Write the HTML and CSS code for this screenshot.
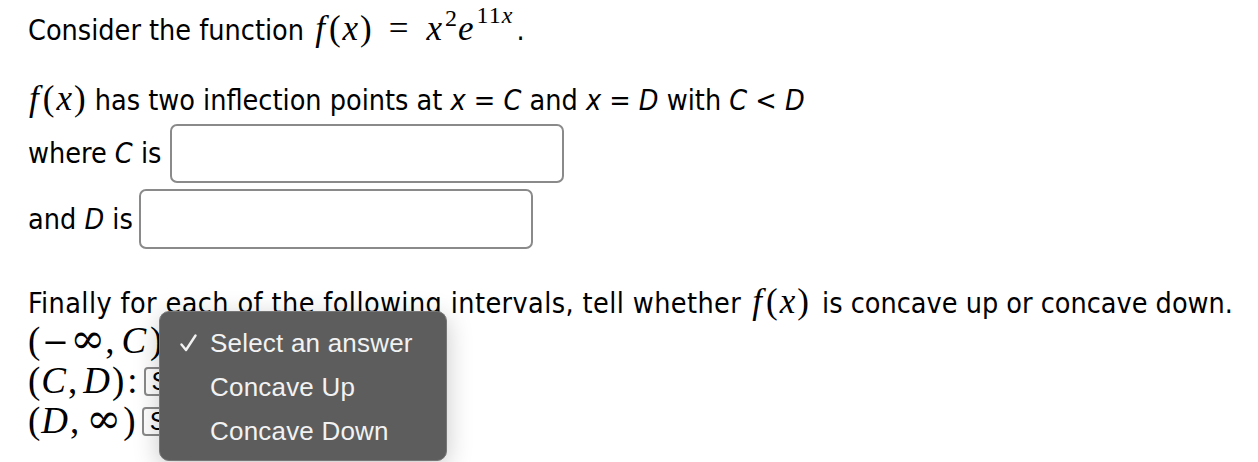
FILE: index.html
```html
<!DOCTYPE html>
<html>
<head>
<meta charset="utf-8">
<link rel="stylesheet" href="styles.css">
</head>
<body>
<div class="page">
  <p class="line l1">Consider the function <span class="math m1"><i class="f">f</i>(<i class="x">x</i>)<span class="op">=</span><i class="x">x</i><sup>2</sup><i>e</i><sup class="sup2">11<i>x</i></sup></span>.</p>
  <p class="line l2"><span class="math"><i class="f">f</i>(<i class="x">x</i>)</span> has two inflection points at <i>x</i> = <i>C</i> and <i>x</i> = <i>D</i> with <i>C</i> &lt; <i>D</i></p>
  <div class="row r1"><span class="label">where <i>C</i> is</span><span class="box box1"></span></div>
  <div class="row r2"><span class="label">and <i>D</i> is</span><span class="box box2"></span></div>
  <p class="line l3"><span class="wide">Finally for each of the following intervals, tell whether</span> <span class="math m3"><i class="f">f</i>(<i class="x">x</i>)</span> is concave up or concave down.</p>
  <div class="intervals">
    <div class="irow"><span class="math">(<span class="minus">−</span><span class="sym">∞</span>,<i class="cv c1">C</i>)</span><span class="sel">Select an answer</span></div>
    <div class="irow"><span class="math">(<i class="cv c0">C</i>,<i class="cv">D</i>)</span><span class="colon">:</span><span class="sel">Select an answer</span></div>
    <div class="irow"><span class="math">(<i class="cv c0">D</i>,<span class="sym inf">∞</span>)</span><span class="sel s3">Select an answer</span></div>
  </div>
  <div class="menu">
    <div class="item"><span class="check"><svg width="17" height="18" viewBox="0 0 17 18"><path d="M1.5 10.5 L6 16 L15.5 1.5" fill="none" stroke="#f2f2f2" stroke-width="2.4" stroke-linecap="round" stroke-linejoin="round"/></svg></span>Select an answer</div>
    <div class="item"><span class="check"></span>Concave Up</div>
    <div class="item"><span class="check"></span>Concave Down</div>
  </div>
</div>
</body>
</html>
```
FILE: styles.css
```css
html, body {
  margin: 0;
  padding: 0;
  background: #ffffff;
}
.page {
  position: relative;
  width: 1258px;
  height: 462px;
  overflow: hidden;
  padding: 0 0 0 28px;
  box-sizing: border-box;
  font-family: "DejaVu Sans Condensed", "DejaVu Sans", sans-serif;
  font-size: 28.5px;
  color: #000;
}
.line {
  margin: 0;
  white-space: nowrap;
}
.math {
  font-family: "Liberation Serif", "DejaVu Serif", serif;
  font-size: 35px;
  letter-spacing: 1px;
}
.math i {
  font-style: italic;
}
.math .f {
  margin-right: 3px;
  margin-left: 1px;
}
.math .x {
  margin: 0 1px;
}
.op {
  margin: 0 16px;
}
.math sup {
  font-size: 24px;
  vertical-align: 14px;
  line-height: 0;
  margin-left: 1px;
}
.math .sup2 {
  vertical-align: 17px;
  margin-left: 2px;
}
.m1 {
  margin-left: 2px;
  margin-right: 3px;
}
.l1 {
  height: 58px;
  line-height: 58px;
}
.l2 {
  margin-top: 16px;
  height: 50px;
  line-height: 50px;
}
.wide {
  letter-spacing: 0.4px;
}
.m3 {
  margin: 0 4px 0 2px;
}
.row {
  display: flex;
  align-items: center;
}
.r1 {
  margin-top: 0;
  height: 59px;
}
.r2 {
  margin-top: 6px;
  height: 60px;
}
.label {
  white-space: nowrap;
  margin-right: 9px;
}
.r2 .label {
  margin-right: 6px;
}
.box {
  display: block;
  height: 100%;
  box-sizing: border-box;
  width: 394px;
  border: 2px solid #8a8a8a;
  border-radius: 7px;
  background: #fff;
}
.l3 {
  margin-top: 30px;
  height: 46px;
  line-height: 46px;
}
.intervals {
  display: flex;
  flex-direction: column;
  margin-top: -4px;
}
.irow {
  display: flex;
  align-items: center;
  height: 40px;
  line-height: 40px;
}
.irow .math {
  font-size: 37px;
  letter-spacing: 0;
}
.irow .math .minus {
  font-family: "DejaVu Serif", serif;
  font-size: 32px;
  margin: 0 1px 0 2px;
}
.irow .math .sym {
  font-family: "DejaVu Serif", serif;
  font-size: 42px;
  line-height: 0;
}
.irow .math .cv {
  margin: 0 2px 0 6px;
}
.irow .math .c1 {
  margin: 0 4px 0 7px;
}
.irow .math .c0 {
  margin-left: 1px;
}
.irow .math .inf {
  margin-left: 7px;
  margin-right: 2px;
}
.colon {
  font-family: "Liberation Serif", serif;
  font-size: 37px;
  margin: 0 6px 0 3px;
}
.sel {
  display: block;
  box-sizing: border-box;
  height: 29px;
  padding: 0 6px;
  border: 2px solid #8a8a8a;
  border-radius: 4px;
  font-family: "Liberation Sans", Arial, sans-serif;
  font-size: 25px;
  line-height: 25px;
  white-space: nowrap;
  margin-left: 6px;
}
.colon + .sel {
  margin-left: 0;
}
.menu {
  position: absolute;
  left: 159px;
  top: 311px;
  width: 288px;
  height: 150px;
  box-sizing: border-box;
  background: #5d5d5d;
  border: 1px solid #777777;
  border-radius: 10px;
  box-shadow: 0 6px 26px rgba(0, 0, 0, 0.22);
  padding-top: 9px;
  font-family: "Liberation Sans", Arial, sans-serif;
  font-size: 26px;
  letter-spacing: 0.2px;
  color: #f2f2f2;
}
.item {
  display: flex;
  align-items: center;
  height: 44px;
  padding-left: 20px;
  white-space: nowrap;
}
.check {
  display: inline-flex;
  align-items: center;
  width: 30px;
  height: 20px;
}
```
